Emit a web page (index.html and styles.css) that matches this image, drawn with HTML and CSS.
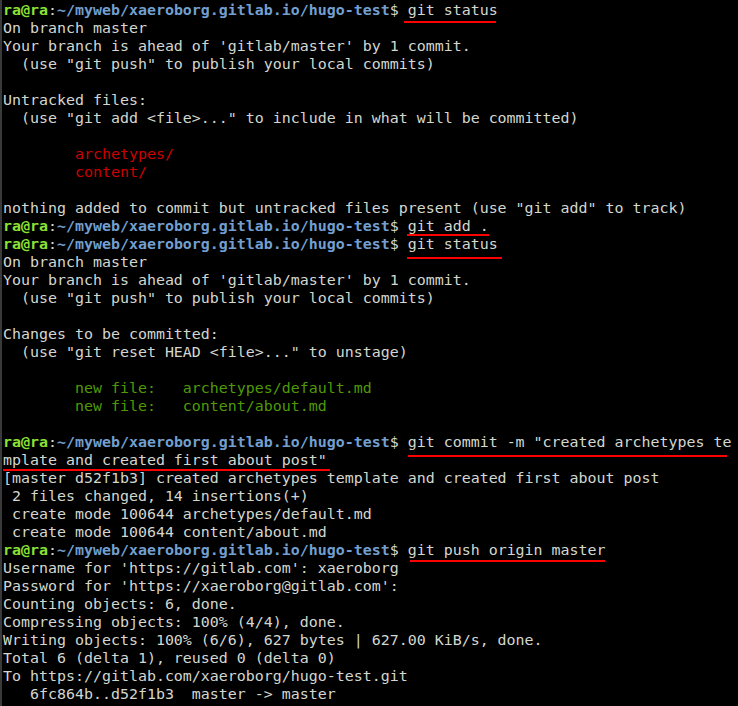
FILE: index.html
```html
<!DOCTYPE html>
<html>
<head>
<meta charset="utf-8">
<link rel="stylesheet" href="styles.css">
</head>
<body>
<div class="term">
<div class="line"><span class="pu">ra@ra</span>:<span class="pp">~/myweb/xaeroborg.gitlab.io/hugo-test</span>$ git status<span class="mark m1"></span></div>
<div class="line">On branch master</div>
<div class="line">Your branch is ahead of 'gitlab/master' by 1 commit.</div>
<div class="line">  (use "git push" to publish your local commits)</div>
<div class="line"></div>
<div class="line">Untracked files:</div>
<div class="line">  (use "git add &lt;file&gt;..." to include in what will be committed)</div>
<div class="line"></div>
<div class="line">        <span class="red">archetypes/</span></div>
<div class="line">        <span class="red">content/</span></div>
<div class="line"></div>
<div class="line">nothing added to commit but untracked files present (use "git add" to track)</div>
<div class="line"><span class="pu">ra@ra</span>:<span class="pp">~/myweb/xaeroborg.gitlab.io/hugo-test</span>$ git add .<span class="mark m2"></span></div>
<div class="line"><span class="pu">ra@ra</span>:<span class="pp">~/myweb/xaeroborg.gitlab.io/hugo-test</span>$ git status<span class="mark m3"></span></div>
<div class="line">On branch master</div>
<div class="line">Your branch is ahead of 'gitlab/master' by 1 commit.</div>
<div class="line">  (use "git push" to publish your local commits)</div>
<div class="line"></div>
<div class="line">Changes to be committed:</div>
<div class="line">  (use "git reset HEAD &lt;file&gt;..." to unstage)</div>
<div class="line"></div>
<div class="line">        <span class="grn">new file:   archetypes/default.md</span></div>
<div class="line">        <span class="grn">new file:   content/about.md</span></div>
<div class="line"></div>
<div class="line"><span class="pu">ra@ra</span>:<span class="pp">~/myweb/xaeroborg.gitlab.io/hugo-test</span>$ git commit -m "created archetypes te<span class="mark m4"></span></div>
<div class="line">mplate and created first about post"<span class="mark m5"></span></div>
<div class="line">[master d52f1b3] created archetypes template and created first about post</div>
<div class="line"> 2 files changed, 14 insertions(+)</div>
<div class="line"> create mode 100644 archetypes/default.md</div>
<div class="line"> create mode 100644 content/about.md</div>
<div class="line"><span class="pu">ra@ra</span>:<span class="pp">~/myweb/xaeroborg.gitlab.io/hugo-test</span>$ git push origin master<span class="mark m6"></span></div>
<div class="line">Username for 'https://gitlab.com': xaeroborg</div>
<div class="line">Password for 'https://xaeroborg@gitlab.com':</div>
<div class="line">Counting objects: 6, done.</div>
<div class="line">Compressing objects: 100% (4/4), done.</div>
<div class="line">Writing objects: 100% (6/6), 627 bytes | 627.00 KiB/s, done.</div>
<div class="line">Total 6 (delta 1), reused 0 (delta 0)</div>
<div class="line">To https://gitlab.com/xaeroborg/hugo-test.git</div>
<div class="line">   6fc864b..d52f1b3  master -&gt; master</div>
</div>
</body>
</html>
```
FILE: styles.css
```css
html, body {
  margin: 0;
  padding: 0;
  background: #000;
  height: 100%;
  overflow: hidden;
}
.term {
  border-left: 2px solid #3a3a3a;
  padding-left: 1px;
  padding-top: 1px;
  min-height: 100%;
  box-sizing: border-box;
  font-family: "DejaVu Sans Mono", "Liberation Mono", monospace;
  font-size: 14.95px;
  line-height: 18px;
  color: #d3d7cf;
}
.line {
  position: relative;
  height: 18px;
  white-space: pre;
}
.pu {
  color: #8ae234;
  font-weight: bold;
}
.pp {
  color: #729fcf;
  font-weight: bold;
}
.red {
  color: #cc0000;
}
.grn {
  color: #4e9a06;
}
.mark {
  position: absolute;
  height: 2px;
  background: #ff0000;
}
.m1 { left: 401px; width: 92px; top: 20px; }
.m2 { left: 404px; width: 82px; top: 17px; }
.m3 { left: 404px; width: 95px; top: 22px; }
.m4 { left: 405px; width: 319px; top: 22px; }
.m5 { left: 0; width: 327px; top: 18px; }
.m6 { left: 407px; width: 195px; top: 19px; }
```
